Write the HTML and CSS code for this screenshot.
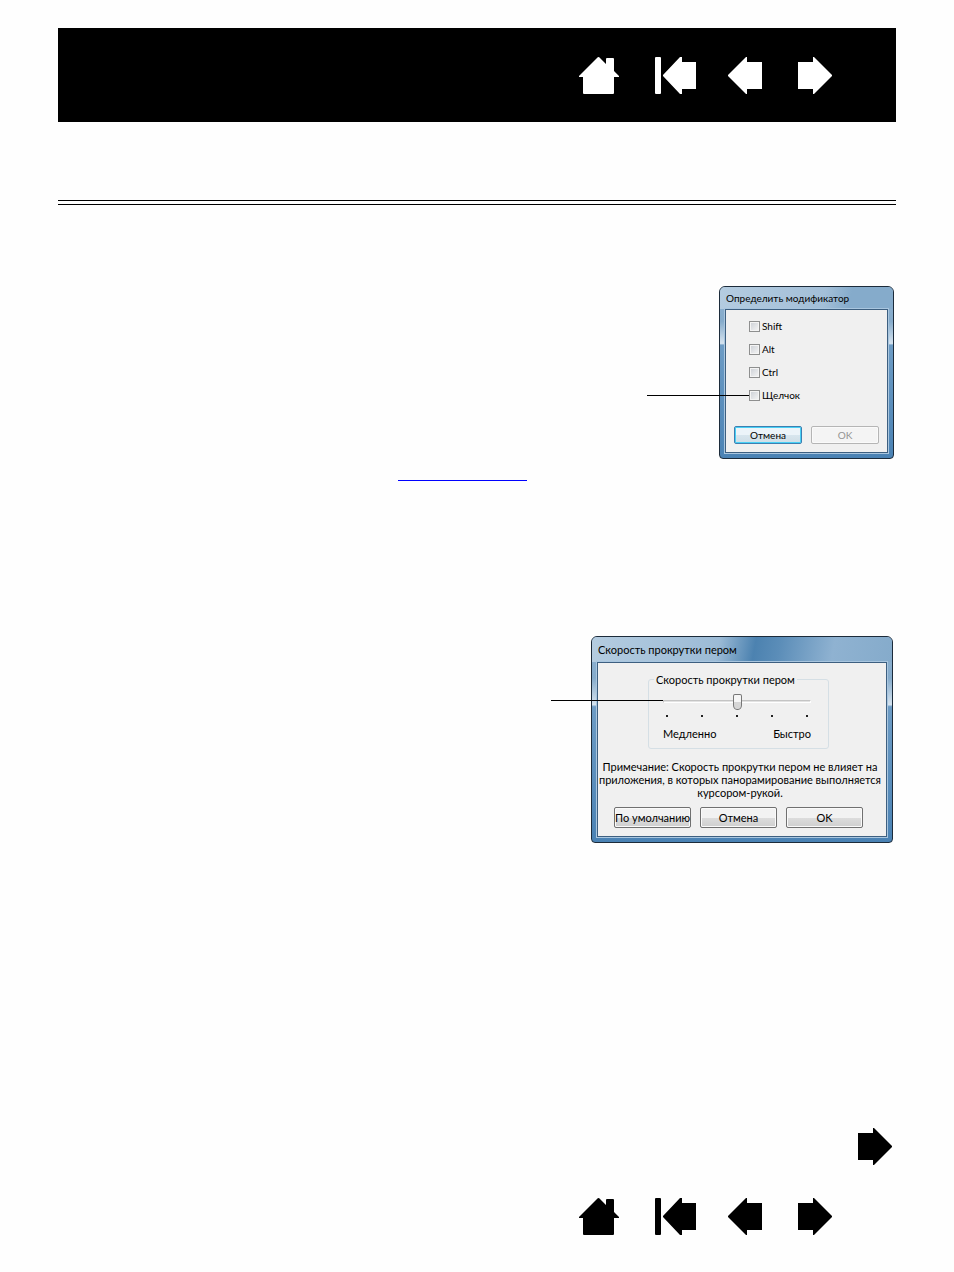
FILE: index.html
```html
<!DOCTYPE html>
<html lang="ru">
<head>
    <meta charset="UTF-8">
    <meta name="viewport" content="width=device-width, initial-scale=1.0">
    <title>Скорость прокрутки пером</title>
    <link rel="stylesheet" href="styles.css">
</head>
<body>
    <!-- Shared icon shapes -->
    <svg class="sprite" width="0" height="0">
        <symbol id="home" viewBox="0 0 44 38">
            <path d="M0 20 L18 2 Q19.500 0 21 2 L27 8 V3 Q27 2 28 2 H34 Q35 2 35 3 V15 L40 20 V21 H35 V37 Q35 38 34 38 H5 Q4 38 4 37 V21 H0 Z"/>
        </symbol>
        <symbol id="first" viewBox="0 0 41 38">
            <rect x="0" y="1" width="6" height="37" rx="1"/>
            <path d="M8 19 L25 1 H27 V6 H41 V33 H27 V38 H25 L8 20 Z"/>
        </symbol>
        <symbol id="prev" viewBox="0 0 38 38">
            <path d="M0 19 L18 1 H19 V6 H34 V33 H19 V38 H18 L0 20 Z"/>
        </symbol>
        <symbol id="next" viewBox="0 0 34 38">
            <path d="M34 19 L16 1 H15 V6 H0 V33 H15 V38 H16 L34 20 Z"/>
        </symbol>
    </svg>

    <div class="page">
        <header class="top-bar">
            <nav class="nav">
                <a href="#" aria-label="Home"><svg class="icon-home"><use href="#home"/></svg></a>
                <a href="#" aria-label="First"><svg class="icon-first"><use href="#first"/></svg></a>
                <a href="#" aria-label="Previous"><svg class="icon-prev"><use href="#prev"/></svg></a>
                <a href="#" aria-label="Next"><svg class="icon-next"><use href="#next"/></svg></a>
            </nav>
        </header>

        <div class="rule"></div>

        <main>
            <form class="dialog modifier">
                <h2 class="title"><span>Определить модификатор</span></h2>
                <div class="client">
                    <div class="checks">
                        <label><input type="checkbox">Shift</label>
                        <label><input type="checkbox">Alt</label>
                        <label><input type="checkbox">Ctrl</label>
                        <label class="callout"><input type="checkbox">Щелчок</label>
                    </div>
                    <div class="buttons">
                        <button type="button" class="focused">Отмена</button>
                        <button type="button" disabled>OK</button>
                    </div>
                </div>
            </form>

            <a class="reference" href="#" aria-label="Link"></a>

            <form class="dialog speed">
                <h2 class="title"><span>Скорость прокрутки пером</span></h2>
                <div class="client">
                    <fieldset>
                        <legend><label for="speed">Скорость прокрутки пером</label></legend>
                        <div class="slider callout">
                            <input type="range" id="speed" min="0" max="4" value="2">
                        </div>
                        <div class="ticks"><i></i><i></i><i></i><i></i><i></i></div>
                        <div class="range-labels"><span>Медленно</span><span>Быстро</span></div>
                    </fieldset>
                    <p class="note">Примечание: Скорость прокрутки пером не влияет на<br>приложения, в которых панорамирование выполняется<br>курсором-рукой.</p>
                    <div class="buttons">
                        <button type="button">По умолчанию</button>
                        <button type="button">Отмена</button>
                        <button type="button">OK</button>
                    </div>
                </div>
            </form>

            <a class="continue" href="#" aria-label="Next"><svg class="icon-next"><use href="#next"/></svg></a>
        </main>

        <footer>
            <nav class="nav">
                <a href="#" aria-label="Home"><svg class="icon-home"><use href="#home"/></svg></a>
                <a href="#" aria-label="First"><svg class="icon-first"><use href="#first"/></svg></a>
                <a href="#" aria-label="Previous"><svg class="icon-prev"><use href="#prev"/></svg></a>
                <a href="#" aria-label="Next"><svg class="icon-next"><use href="#next"/></svg></a>
            </nav>
        </footer>
    </div>
</body>
</html>
```
FILE: styles.css
```css
* {
    box-sizing: border-box;
}

body {
    margin: 0;
    background-color: #fefefe;
    color: black;
    font-family: Lato, "Open Sans", sans-serif;
    font-size: 11px;
    line-height: 13px;
}

.sprite {
    position: absolute;
}

.page {
    padding: 28px 58px;
}

.top-bar {
    padding: 28px 0;
    background-color: black;
    color: white;
}

.nav {
    display: flex;
    justify-content: flex-end;
    gap: 32px;
    padding-right: 64px;
}

.nav a,
.continue {
    display: block;
    height: 38px;
    color: inherit;
}

svg {
    display: block;
    height: 38px;
    fill: currentColor;
}

.icon-home {
    width: 44px;
}

.icon-first {
    width: 41px;
}

.icon-prev {
    width: 38px;
}

.icon-next {
    width: 34px;
}

.rule {
    height: 5px;
    margin-top: 78px;
    border-top: 1px solid black;
    border-bottom: 1px solid black;
}

main {
    display: flex;
    flex-direction: column;
    align-items: flex-end;
    padding-top: 81px;
}

/* Windows 7 style dialogs */
.dialog {
    padding: 0 5px 5px;
    border: 1px solid #1c2b3a;
    border-radius: 6px 6px 4px 4px;
    background: linear-gradient(#8fb2d1 0, #85abcb 20%, #d5e3ef 33%, #6d9cc5 34%, #4a82b4 100%);
}

.title {
    margin: 0 -5px;
    padding: 0 6px;
    border-radius: 5px 5px 0 0;
    background: linear-gradient(100deg, #b4cce0 0, #9cbbd6 42%, #4c82b0 54%, #5b8db8 62%, #8fb2d1 80%, #85abcb 100%);
    font-size: inherit;
    font-weight: normal;
}

.client {
    border: 1px solid #3d5f80;
    background-color: #f0f0f0;
    box-shadow: 0 0 0 1px #a9c6df;
}

.buttons {
    display: flex;
    gap: 9px;
}

button {
    flex: 1 1 0;
    min-width: 0;
    padding: 0;
    border: 1px solid #707070;
    border-radius: 2px;
    background: linear-gradient(#f2f2f2 50%, #dddddd 50%, #cfcfcf);
    box-shadow: inset 0 0 0 1px #fafafa;
    color: black;
    font: inherit;
    white-space: nowrap;
}

button.focused {
    border-color: #3c7fb1;
    background: linear-gradient(#ecf4f9 50%, #d8e6ee 50%, #cfdee6);
    box-shadow: inset 0 0 0 1px #48d0f5;
}

button:disabled {
    border-color: #b5b5b5;
    background: #f4f4f4;
    color: #939393;
}

.callout {
    position: relative;
}

.callout::before {
    content: "";
    position: absolute;
    right: 100%;
    height: 1px;
    background-color: black;
}

.modifier {
    width: 175px;
    margin-right: 2px;
    font-size: 10px;
}

.modifier .title {
    line-height: 22px;
    background: linear-gradient(100deg, #b4cce0 0, #a3bfd8 60%, #85abcb 75%);
}

.modifier .client {
    padding: 8px;
}

.modifier button {
    height: 18px;
}

.checks {
    display: flex;
    flex-direction: column;
    align-items: flex-start;
    gap: 7px;
    padding-left: 15px;
    margin-bottom: 23px;
}

.checks label {
    display: flex;
    align-items: center;
    gap: 2px;
    height: 16px;
}

.checks input {
    appearance: none;
    width: 11px;
    height: 11px;
    margin: 0;
    border: 1px solid #8e8f8f;
    background: linear-gradient(135deg, #cbcfd5, #f6f6f6);
    box-shadow: inset 0 0 0 1px #f4f4f4;
}

.checks .callout::before {
    top: 8px;
    width: 102px;
}

.reference {
    align-self: flex-start;
    width: 129px;
    height: 22px;
    margin-left: 340px;
    border-bottom: 1px solid #0000ff;
}

.speed {
    width: 302px;
    margin: 155px 3px 0 0;
}

.speed .title {
    line-height: 25px;
}

.speed .client {
    padding: 10px 23px 8px 16px;
}

.speed button {
    height: 21px;
}

fieldset {
    width: 181px;
    height: 76px;
    margin: 0 0 0 34px;
    padding: 0 17px 0 14px;
    border: 1px solid #d5dfe5;
    border-radius: 3px;
}

legend {
    margin-left: -9px;
    padding: 0 2px;
}

.slider {
    height: 24px;
    padding-top: 7px;
}

.slider input {
    appearance: none;
    display: block;
    width: 100%;
    height: 16px;
    margin: 0;
    background: none;
}

.slider input::-webkit-slider-runnable-track {
    height: 3px;
    border: 1px solid #c4c4c4;
    border-right-color: white;
    border-bottom-color: white;
    background-color: #e2e2e2;
}

.slider input::-webkit-slider-thumb {
    appearance: none;
    width: 9px;
    height: 16px;
    margin-top: -7px;
    border: 1px solid #777777;
    border-radius: 2px 2px 4px 4px / 2px 2px 5px 5px;
    background: linear-gradient(#f6f6f6 50%, #d6d6d6 50%);
}

.slider::before {
    top: 14px;
    width: 112px;
}

.ticks {
    display: flex;
    justify-content: space-between;
    padding: 5px 3px 0;
}

.ticks i {
    width: 2px;
    height: 2px;
    background-color: #222222;
}

.range-labels {
    display: flex;
    justify-content: space-between;
    margin-top: 10px;
}

.note {
    margin: 11px -19px 8px -16px;
    text-align: center;
    white-space: nowrap;
}

.continue {
    margin: 284px 4px 0 0;
}

footer {
    margin-top: 32px;
}
```
